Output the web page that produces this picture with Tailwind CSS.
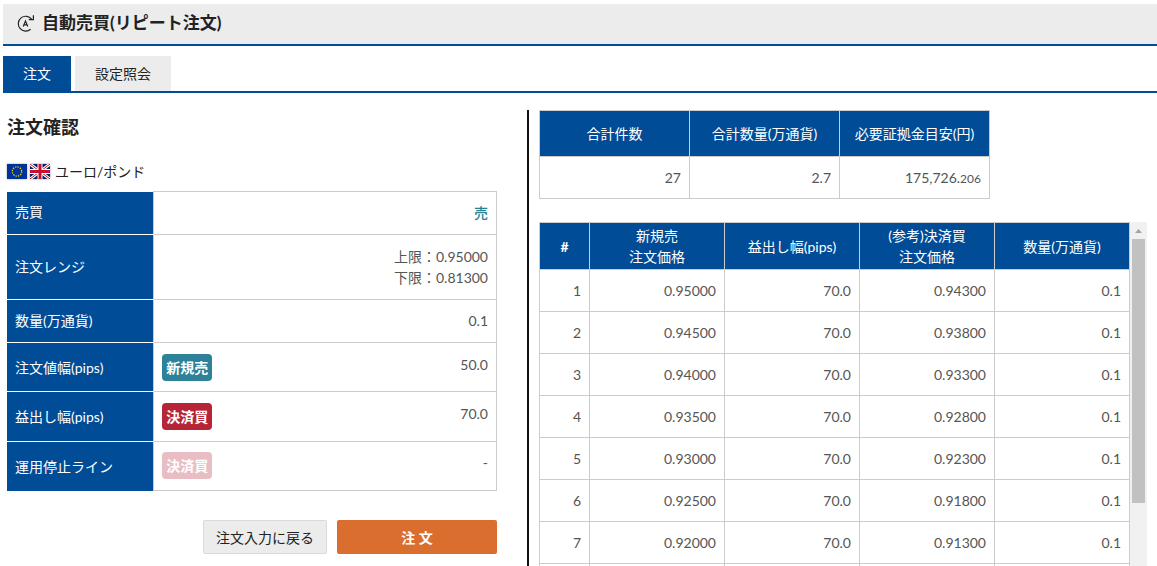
<!DOCTYPE html>
<html lang="ja">
<head>
<meta charset="utf-8">
<meta name="viewport" content="width=device-width, initial-scale=1">
<title>自動売買(リピート注文)</title>
<script src="https://cdn.jsdelivr.net/npm/@tailwindcss/browser@4"></script>
</head>
<body class="flex h-screen flex-col overflow-hidden bg-white pt-1 pl-[3px] font-['Lato','Noto_Sans_CJK_JP',sans-serif] text-[14px] leading-[21px] text-[#555]">
<header class="flex h-[42px] shrink-0 items-center gap-[7px] border-b-2 border-[#004c97] bg-[#ececec] pb-[2px] pl-[13px] text-[#222]">
  <svg class="size-[19px]" viewBox="0 0 19 19" fill="none" stroke="#222" stroke-width="1.2" aria-hidden="true">
    <path d="M15.6 5.2A7.4 7.4 0 1 0 14.6 15.2"/>
    <path d="M17.4 1.2V5.6H12.8"/>
    <path d="M7.2 12.4 9.5 7 11.8 12.4M8 10.8H11"/>
  </svg>
  <h1 class="text-[17px] leading-6 font-bold">自動売買(リピート注文)</h1>
</header>

<nav class="mt-[10px] flex h-[37px] shrink-0 gap-1 border-b-2 border-[#004c97]">
  <a href="#order" aria-current="page" class="flex items-center bg-[#004c97] px-5 text-white">注文</a>
  <a href="#settings" class="flex items-center bg-[#ececec] px-5 text-[#222]">設定照会</a>
</nav>

<main class="mt-[17px] grid min-h-0 flex-1 grid-cols-[49fr_62fr] gap-[30px] pr-[10px] pl-1">
  <section>
    <h2 class="mt-[5px] text-[18px] leading-6 font-bold text-[#222]">注文確認</h2>
    <div class="mt-[22px] flex h-[21px] items-center gap-[3px] text-[#222]">
      <svg class="h-[15px] w-5 shadow-[0_0_2px_#999]" viewBox="0 0 20 15" role="img" aria-label="EU">
        <path fill="#039" d="M0 0h20v15H0z"/>
        <circle cx="10" cy="7.5" r="4.7" fill="none" stroke="#e8d01c" stroke-width="1.3" stroke-dasharray="1.3 1.161"/>
      </svg>
      <svg class="h-[15px] w-5 shadow-[0_0_2px_#999]" viewBox="0 0 20 15" role="img" aria-label="UK">
        <path fill="#012169" d="M0 0h20v15H0z"/>
        <path stroke="#fff" stroke-width="3" d="M0 0 20 15M20 0 0 15"/>
        <path stroke="#c8102e" stroke-width="1" d="M0 0 20 15M20 0 0 15"/>
        <path stroke="#fff" stroke-width="5" d="M10 0v15M0 7.5h20"/>
        <path stroke="#c8102e" stroke-width="3" d="M10 0v15M0 7.5h20"/>
      </svg>
      <span class="pl-[2px]">ユーロ/ポンド</span>
    </div>

    <table class="mt-[9px] w-full table-fixed border-collapse text-right">
      <colgroup><col class="w-[30%]"><col></colgroup>
      <tbody>
        <tr class="h-[43px]"><th scope="row" class="border-b border-white bg-[#004c97] px-2 pb-[2px] text-left font-normal text-white">売買</th><td class="border border-[#ccc] px-2 pb-[2px] font-medium text-[#2a8094]">売</td></tr>
        <tr class="h-[65px]"><th scope="row" class="border-b border-white bg-[#004c97] px-2 pb-[2px] text-left font-normal text-white">注文レンジ</th><td class="border border-[#ccc] px-2">上限：0.95000<br>下限：0.81300</td></tr>
        <tr class="h-[43px]"><th scope="row" class="border-b border-white bg-[#004c97] px-2 pb-[2px] text-left font-normal text-white">数量(万通貨)</th><td class="border border-[#ccc] px-2 pb-[2px]">0.1</td></tr>
        <tr class="h-[49px]"><th scope="row" class="border-b border-white bg-[#004c97] px-2 text-left font-normal text-white">注文値幅(pips)</th><td class="border border-[#ccc] px-2"><div class="flex items-start justify-between"><span class="rounded bg-[#2d8198] px-1 leading-[27px] font-bold text-white">新規売</span><span>50.0</span></div></td></tr>
        <tr class="h-[50px]"><th scope="row" class="border-b border-white bg-[#004c97] px-2 text-left font-normal text-white">益出し幅(pips)</th><td class="border border-[#ccc] px-2"><div class="flex items-start justify-between"><span class="rounded bg-[#b52535] px-1 leading-[27px] font-bold text-white">決済買</span><span>70.0</span></div></td></tr>
        <tr class="h-[49px]"><th scope="row" class="bg-[#004c97] px-2 text-left font-normal text-white">運用停止ライン</th><td class="border border-[#ccc] px-2 pb-[2px]"><div class="flex items-start justify-between"><span class="rounded bg-[#e8bdc3] px-1 leading-[27px] font-bold text-white">決済買</span><span>-</span></div></td></tr>
      </tbody>
    </table>

    <div class="mt-[29px] flex justify-end gap-[10px]">
      <button type="button" class="h-[34px] rounded-xs border border-[#d9d9d9] bg-[#ececec] px-[12px] text-[#222]">注文入力に戻る</button>
      <button type="button" class="h-[34px] w-40 rounded-xs bg-[#da6e2f] font-bold text-white">注 文</button>
    </div>
  </section>

  <section class="flex min-h-0 flex-col border-l-2 border-[#111] pl-[10px]">
    <table class="w-[451px] max-w-full shrink-0 table-fixed border-collapse text-right">
      <thead>
        <tr class="h-[46px] bg-[#004c97] text-center text-white">
          <th scope="col" class="border border-[#ccc] font-normal">合計件数</th>
          <th scope="col" class="border border-[#ccc] font-normal">合計数量(万通貨)</th>
          <th scope="col" class="border border-[#ccc] font-normal">必要証拠金目安(円)</th>
        </tr>
      </thead>
      <tbody>
        <tr class="h-[42px]">
          <td class="border border-[#ccc] px-2">27</td>
          <td class="border border-[#ccc] px-2">2.7</td>
          <td class="border border-[#ccc] px-2">175,726.<span class="text-[12px]">206</span></td>
        </tr>
      </tbody>
    </table>

    <div class="mt-[23px] flex min-h-0 flex-1 overflow-hidden">
      <div class="min-w-0 flex-1">
        <table class="w-full table-fixed border-collapse text-right">
          <colgroup><col class="w-[50px]"><col><col><col><col></colgroup>
          <thead>
            <tr class="h-[47px] bg-[#004c97] text-center text-white">
              <th scope="col" class="border border-[#ccc]">#</th>
              <th scope="col" class="border border-[#ccc] font-normal">新規売<br>注文価格</th>
              <th scope="col" class="border border-[#ccc] font-normal">益出し幅(pips)</th>
              <th scope="col" class="border border-[#ccc] font-normal">(参考)決済買<br>注文価格</th>
              <th scope="col" class="border border-[#ccc] font-normal">数量(万通貨)</th>
            </tr>
          </thead>
          <tbody>
            <tr class="h-[42px]"><td class="border border-[#ccc] px-2">1</td><td class="border border-[#ccc] px-2">0.95000</td><td class="border border-[#ccc] px-2">70.0</td><td class="border border-[#ccc] px-2">0.94300</td><td class="border border-[#ccc] px-2">0.1</td></tr>
            <tr class="h-[42px]"><td class="border border-[#ccc] px-2">2</td><td class="border border-[#ccc] px-2">0.94500</td><td class="border border-[#ccc] px-2">70.0</td><td class="border border-[#ccc] px-2">0.93800</td><td class="border border-[#ccc] px-2">0.1</td></tr>
            <tr class="h-[42px]"><td class="border border-[#ccc] px-2">3</td><td class="border border-[#ccc] px-2">0.94000</td><td class="border border-[#ccc] px-2">70.0</td><td class="border border-[#ccc] px-2">0.93300</td><td class="border border-[#ccc] px-2">0.1</td></tr>
            <tr class="h-[42px]"><td class="border border-[#ccc] px-2">4</td><td class="border border-[#ccc] px-2">0.93500</td><td class="border border-[#ccc] px-2">70.0</td><td class="border border-[#ccc] px-2">0.92800</td><td class="border border-[#ccc] px-2">0.1</td></tr>
            <tr class="h-[42px]"><td class="border border-[#ccc] px-2">5</td><td class="border border-[#ccc] px-2">0.93000</td><td class="border border-[#ccc] px-2">70.0</td><td class="border border-[#ccc] px-2">0.92300</td><td class="border border-[#ccc] px-2">0.1</td></tr>
            <tr class="h-[42px]"><td class="border border-[#ccc] px-2">6</td><td class="border border-[#ccc] px-2">0.92500</td><td class="border border-[#ccc] px-2">70.0</td><td class="border border-[#ccc] px-2">0.91800</td><td class="border border-[#ccc] px-2">0.1</td></tr>
            <tr class="h-[42px]"><td class="border border-[#ccc] px-2">7</td><td class="border border-[#ccc] px-2">0.92000</td><td class="border border-[#ccc] px-2">70.0</td><td class="border border-[#ccc] px-2">0.91300</td><td class="border border-[#ccc] px-2">0.1</td></tr>
            <tr class="h-[42px]"><td class="border border-[#ccc]"></td><td class="border border-[#ccc]"></td><td class="border border-[#ccc]"></td><td class="border border-[#ccc]"></td><td class="border border-[#ccc]"></td></tr>
          </tbody>
        </table>
      </div>
      <div class="flex w-[17px] shrink-0 flex-col items-center bg-[#f1f1f1]" aria-hidden="true">
        <svg class="h-[17px] w-[17px] shrink-0" viewBox="0 0 17 17"><path fill="#a3a3a3" d="M5 11 8.5 7 12 11z"/></svg>
        <div class="h-[264px] w-[13px] shrink-0 bg-[#c1c1c1]"></div>
      </div>
    </div>
  </section>
</main>
</body>
</html>
